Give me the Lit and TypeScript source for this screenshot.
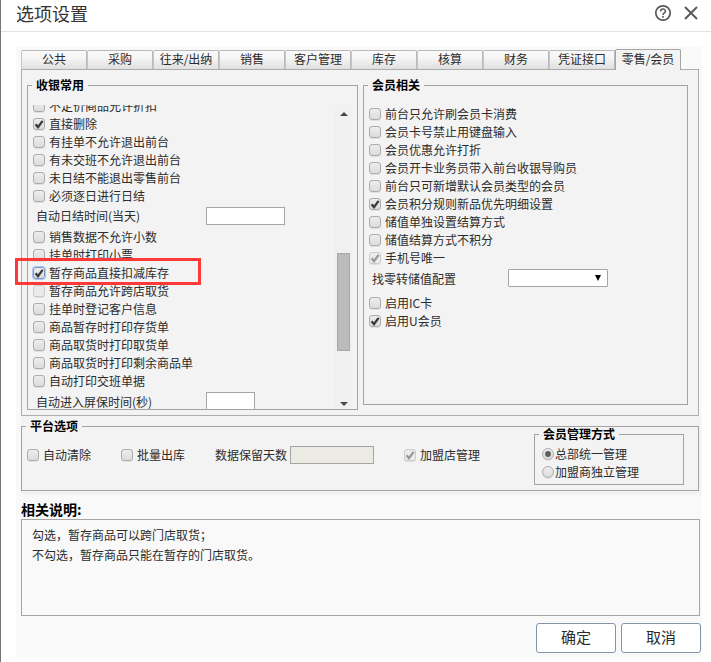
import { LitElement, html, css, svg, nothing } from "lit";
import { customElement, property } from "lit/decorators.js";
import { classMap } from "lit/directives/class-map.js";

const FONT = css`"Noto Sans CJK SC", sans-serif`;

@customElement("check-item")
class CheckItem extends LitElement {
  @property() label = "";
  @property() kind = "check";
  @property({ type: Boolean }) checked = false;
  @property({ type: Boolean }) disabled = false;
  @property({ type: Boolean }) focused = false;

  static styles = css`
    :host { display: flex; align-items: center; height: 18px; flex: none; white-space: nowrap; }
    .mark {
      box-sizing: border-box; width: 12px; height: 12px; flex: none;
      border: 1px solid #acacac; border-radius: 3px;
      background: linear-gradient(#ededed, #dcdcdc);
      box-shadow: 0 1px 0 rgba(0, 0, 0, 0.08);
      margin-right: 4px;
    }
    .mark svg { display: block; width: 10px; height: 10px; }
    .disabled { border-color: #cbcbcb; background: #ebebeb; }
    .focused { border-color: #7d97c4; box-shadow: 0 0 0 1px #a9c4f5; }
    .radio { border-radius: 50%; margin-right: 1px; }
    .text { line-height: 18px; }
  `;

  render() {
    const ink = this.disabled ? "#999" : "#3c3c3c";
    const tick = svg`<path d="M1.6 5.2 L4 8.2 L8.6 1.8" fill="none" stroke=${ink} stroke-width="2.3"/>`;
    const dot = svg`<circle cx="5" cy="5" r="2.9" fill="#5e5e5e"/>`;
    const cls = { mark: true, disabled: this.disabled, focused: this.focused, radio: this.kind === "radio" };
    return html`
      <span class=${classMap(cls)}>
        ${this.checked ? html`<svg viewBox="0 0 10 10">${this.kind === "radio" ? dot : tick}</svg>` : nothing}
      </span>
      <span class="text">${this.label}</span>
    `;
  }
}

type Item = { t: string; c?: boolean; d?: boolean; f?: boolean };

const TABS = ["公共", "采购", "往来/出纳", "销售", "客户管理", "库存", "核算", "财务", "凭证接口", "零售/会员"];

const CASHIER_TOP: Item[] = [
  { t: "不定价商品允许折扣" },
  { t: "直接删除", c: true },
  { t: "有挂单不允许退出前台" },
  { t: "有未交班不允许退出前台" },
  { t: "未日结不能退出零售前台" },
  { t: "必须逐日进行日结" },
];

const CASHIER_BOTTOM: Item[] = [
  { t: "销售数据不允许小数" },
  { t: "挂单时打印小票" },
  { t: "暂存商品直接扣减库存", c: true, f: true },
  { t: "暂存商品允许跨店取货", d: true },
  { t: "挂单时登记客户信息" },
  { t: "商品暂存时打印存货单" },
  { t: "商品取货时打印取货单" },
  { t: "商品取货时打印剩余商品单" },
  { t: "自动打印交班单据" },
];

const MEMBER: Item[] = [
  { t: "前台只允许刷会员卡消费" },
  { t: "会员卡号禁止用键盘输入" },
  { t: "会员优惠允许打折" },
  { t: "会员开卡业务员带入前台收银导购员" },
  { t: "前台只可新增默认会员类型的会员" },
  { t: "会员积分规则新品优先明细设置", c: true },
  { t: "储值单独设置结算方式" },
  { t: "储值结算方式不积分" },
  { t: "手机号唯一", c: true, d: true },
];

const MEMBER_MORE: Item[] = [{ t: "启用IC卡" }, { t: "启用U会员", c: true }];

@customElement("app-root")
class AppRoot extends LitElement {
  static styles = css`
    :host {
      display: block; box-sizing: border-box; position: relative;
      width: 711px; height: 662px; overflow: hidden;
      background: #fff; border-left: 1px solid #77777b;
      font: 12px/18px ${FONT}; color: #2c2c2c;
    }
    * { box-sizing: border-box; }
    .header {
      display: flex; align-items: center; height: 32px;
      padding: 0 13px 5px 15px; border-bottom: 1px solid #e2e2e2;
    }
    .title { flex: 1; font-size: 18px; line-height: 27px; color: #333; }
    .help { width: 18px; height: 18px; margin-right: 12px; }
    .close { width: 14px; height: 14px; }
    .body {
      margin: 15px 9px 0 15px; height: 610px; padding: 2px 0 0 5px;
      background: #f9f9f9;
    }
    .tabs { display: flex; align-items: flex-end; height: 20px; }
    .tab {
      width: 66px; height: 19px; line-height: 16px; text-align: center;
      border: 1px solid #b9b9b9; border-bottom: none; border-left-color: #c6c6c6;
      border-radius: 2px 2px 0 0;
      background: linear-gradient(#fafafa 0, #f5f5f5 40%, #dfdfdf 100%);
    }
    .tab.active {
      height: 21px; margin-bottom: -1px; background: #f3f3f3;
      border-color: #a5a5a5; line-height: 17px; position: relative;
    }
    .panel {
      display: flex; gap: 5px; align-items: flex-start;
      width: 678px; height: 347px; padding: 15px 0 0 5px;
      border: 1px solid #adadad; background: #f3f3f3;
    }
    .group { border: 1px solid #a3a3a3; display: flex; flex-direction: column; }
    .legend {
      align-self: flex-start; height: 14px; line-height: 14px; margin: -8px 0 0 4px; padding: 0 4px;
      background: #f3f3f3; color: #000; font-weight: 700; flex: none;
    }
    .cashier { width: 331px; height: 325px; }
    .member { width: 325px; height: 320px; }
    .scroll { display: flex; justify-content: space-between; height: 304px; margin-top: 13px; overflow: hidden; }
    .list { display: flex; flex-direction: column; margin: -8px 0 0 5px; }
    .field { display: flex; flex: none; padding-left: 3px; }
    .field .name { width: 170px; }
    .day { height: 23px; padding-top: 2px; }
    .saver { height: 24px; padding-top: 2px; }
    .saver .name { padding-top: 1px; }
    .box { border: 1px solid #a5a5a5; background: #fff; height: 18px; }
    .w79 { width: 79px; }
    .w49 { width: 49px; height: 22px; }
    .bar {
      display: flex; flex-direction: column; align-items: center;
      width: 17px; height: 303px; margin-right: 5px; background: #f0f0f0;
    }
    .up, .down { width: 0; height: 0; border: 4px solid transparent; flex: none; }
    .up { border-top: 0; border-bottom: 4px solid #484848; margin-top: 7px; }
    .down { border-bottom: 0; border-top: 4px solid #484848; margin-top: 51px; }
    .thumb { width: 13px; height: 98px; margin-top: 137px; border: 1px solid #a8a8a8; background: #bbb; flex: none; }
    .member .list { margin: 13px 0 0 5px; }
    .change { height: 27px; padding-top: 3px; }
    .change .name { width: 136px; }
    .select {
      display: flex; align-items: center; justify-content: flex-end;
      width: 100px; height: 18px; margin-top: -1px; padding-right: 6px;
      border: 1px solid #a5a5a5; border-radius: 1px; background: #fff;
    }
    .caret { border: 3.5px solid transparent; border-top: 6px solid #000; border-bottom: 0; }
    .lower { width: 680px; height: 79px; padding-top: 10px; background: #f3f3f3; }
    .platform { width: 678px; height: 65px; }
    .options { display: flex; align-items: flex-start; padding: 13px 0 0 5px; }
    .auto { width: 94px; }
    .batch { width: 94px; }
    .keep { width: 75px; }
    .days { width: 84px; background: #ebebe3; margin-right: 30px; }
    .join { width: 130px; }
    .mode { width: 150px; height: 51px; margin-top: -12px; }
    .mode .radios { padding: 4px 0 0 7px; }
    .caption { height: 24px; line-height: 28px; font-size: 14px; font-weight: 700; color: #000; }
    .note { width: 679px; height: 97px; padding: 5px 10px; line-height: 20px; border: 1px solid #a5a5a5; }
    .actions { display: flex; justify-content: flex-end; gap: 5px; margin: 7px 1px 0 0; }
    .btn {
      width: 80px; height: 30px; line-height: 26px; text-align: center; font-size: 15px; color: #2c2c2c;
      border: 1px solid #8494ad; border-radius: 3px; background: #fff;
    }
    .callout { position: absolute; left: 14px; top: 258px; width: 186px; height: 27px; border: 3px solid #ff3838; }
  `;

  private item(i: Item) {
    return html`<check-item .label=${i.t} ?checked=${i.c} ?disabled=${i.d} ?focused=${i.f}></check-item>`;
  }

  render() {
    return html`
      <div class="header">
        <div class="title">选项设置</div>
        <svg class="help" viewBox="0 0 18 18" fill="none" stroke="#58585c">
          <circle cx="9" cy="9" r="7.2" stroke-width="1.7"/>
          <path d="M6.6 7.4 C6.6 4.2 11.4 4.2 11.4 7.2 C11.4 8.9 9 8.9 9 10.9" stroke-width="1.5"/>
          <path d="M9 12v1.7" stroke-width="1.6"/>
        </svg>
        <svg class="close" viewBox="0 0 14 14" stroke="#58585c" stroke-width="1.9">
          <path d="M1 1 L13 13 M13 1 L1 13"/>
        </svg>
      </div>
      <div class="body">
        <div class="tabs">
          ${TABS.map((t, i) => html`<div class=${classMap({ tab: true, active: i === TABS.length - 1 })}>${t}</div>`)}
        </div>
        <div class="panel">
          <div class="group cashier">
            <div class="legend">收银常用</div>
            <div class="scroll">
              <div class="list">
                ${CASHIER_TOP.map(this.item)}
                <div class="field day"><span class="name">自动日结时间(当天)</span><span class="box w79"></span></div>
                ${CASHIER_BOTTOM.map(this.item)}
                <div class="field saver"><span class="name">自动进入屏保时间(秒)</span><span class="box w49"></span></div>
              </div>
              <div class="bar"><i class="up"></i><i class="thumb"></i><i class="down"></i></div>
            </div>
          </div>
          <div class="group member">
            <div class="legend">会员相关</div>
            <div class="list">
              ${MEMBER.map(this.item)}
              <div class="field change"><span class="name">找零转储值配置</span><span class="select"><i class="caret"></i></span></div>
              ${MEMBER_MORE.map(this.item)}
            </div>
          </div>
        </div>
        <div class="lower">
          <div class="group platform">
            <div class="legend">平台选项</div>
            <div class="options">
              <check-item class="auto" label="自动清除"></check-item>
              <check-item class="batch" label="批量出库"></check-item>
              <span class="keep">数据保留天数</span>
              <span class="box days"></span>
              <check-item class="join" label="加盟店管理" checked disabled></check-item>
              <div class="group mode">
                <div class="legend">会员管理方式</div>
                <div class="radios">
                  <check-item kind="radio" label="总部统一管理" checked></check-item>
                  <check-item kind="radio" label="加盟商独立管理"></check-item>
                </div>
              </div>
            </div>
          </div>
        </div>
        <div class="caption">相关说明:</div>
        <div class="note">
          <div>勾选，暂存商品可以跨门店取货；</div>
          <div>不勾选，暂存商品只能在暂存的门店取货。</div>
        </div>
        <div class="actions">
          <div class="btn">确定</div>
          <div class="btn">取消</div>
        </div>
      </div>
      <div class="callout"></div>
    `;
  }
}
